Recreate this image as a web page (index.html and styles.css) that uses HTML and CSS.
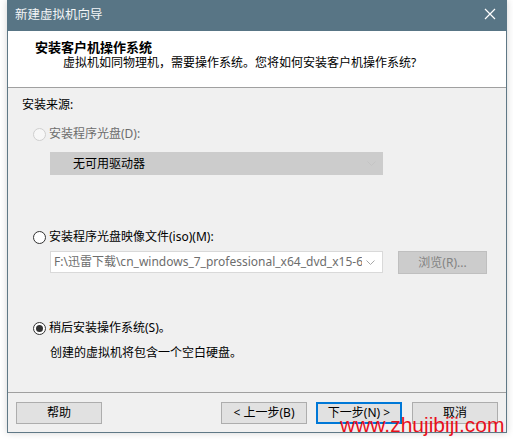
FILE: index.html
```html
<!DOCTYPE html>
<html lang="zh-CN">
<head>
<meta charset="utf-8">
<title>新建虚拟机向导</title>
<link rel="stylesheet" href="styles.css">
</head>
<body>
<div class="window">
  <div class="titlebar">
    <span class="title">新建虚拟机向导</span>
    <svg class="close" width="12" height="12" viewBox="0 0 12 12"><path d="M1 1 L11 11 M11 1 L1 11" stroke="#ffffff" stroke-width="1.2" fill="none"/></svg>
  </div>
  <div class="header">
    <div class="heading">安装客户机操作系统</div>
    <div class="subtitle">虚拟机如同物理机，需要操作系统。您将如何安装客户机操作系统?</div>
  </div>
  <div class="content">
    <div class="label">安装来源:</div>
    <div class="radio-row disabled r1">
      <span class="radio"></span><span>安装程序光盘(D):</span>
    </div>
    <div class="combo disabled-combo">
      <span class="combo-text">无可用驱动器</span>
      <svg class="chev" width="9" height="5" viewBox="0 0 9 5"><path d="M0.5 0.5 L4.5 4.5 L8.5 0.5" stroke="#c4c4c4" fill="none"/></svg>
    </div>
    <div class="radio-row r2">
      <span class="radio"></span><span>安装程序光盘映像文件(iso)(M):</span>
    </div>
    <div class="iso-row">
      <div class="combo iso-combo">
        <span class="iso-text">F:\迅雷下载\cn_windows_7_professional_x64_dvd_x15-65791.iso</span>
        <svg class="chev" width="9" height="5" viewBox="0 0 9 5"><path d="M0.5 0.5 L4.5 4.5 L8.5 0.5" stroke="#a8a8a8" fill="none"/></svg>
      </div>
      <div class="btn btn-disabled browse">浏览(R)...</div>
    </div>
    <div class="radio-row r3">
      <span class="radio checked"></span><span>稍后安装操作系统(S)。</span>
    </div>
    <div class="note">创建的虚拟机将包含一个空白硬盘。</div>
  </div>
  <div class="footer">
    <div class="btn">帮助</div>
    <div class="spacer"></div>
    <div class="btn">&lt; 上一步(B)</div>
    <div class="btn btn-focus">下一步(N) &gt;</div>
    <div class="btn">取消</div>
  </div>
</div>
<div class="watermark">www.zhujibiji.com</div>
</body>
</html>
```

FILE: styles.css
```css
* { box-sizing: border-box; }
html, body { margin: 0; padding: 0; }
body {
  width: 513px;
  height: 440px;
  background: #ffffff;
  font-family: "Noto Sans", "Noto Sans CJK SC", sans-serif;
  font-size: 12px;
  color: #000;
  position: relative;
  overflow: hidden;
}
.window {
  margin-left: 7px;
  width: 500px;
  height: 433px;
  border: 1px solid #5f7886;
  border-top: none;
  background: #f0f0f0;
  display: flex;
  flex-direction: column;
  box-shadow: 0 0 7px rgba(0,0,0,0.18);
}
.titlebar {
  height: 31px;
  background: #587585;
  color: #f4f6f7;
  display: flex;
  align-items: center;
  justify-content: space-between;
  padding: 0 11px 2px 8px;
  margin: 0 -1px;
  font-size: 12.5px;
  line-height: 16px;
}
.close { display: block; margin-top: -2px; }
.header {
  height: 57px;
  background: #ffffff;
  border-bottom: 1px solid #a0a0a0;
  padding-top: 8px;
  line-height: 16px;
}
.heading {
  padding-left: 27px;
  font-weight: bold;
  font-size: 13px;
}
.subtitle {
  padding-left: 55px;
}
.content {
  flex: 1;
  padding-top: 9px;
  line-height: 16px;
  display: flex;
  flex-direction: column;
  align-items: flex-start;
}
.label { padding-left: 14px; }
.radio-row {
  display: flex;
  align-items: center;
  gap: 3px;
  padding-left: 25px;
  height: 16px;
}
.radio {
  width: 13px;
  height: 13px;
  border: 1px solid #333;
  border-radius: 50%;
  background: #fff;
  display: flex;
  align-items: center;
  justify-content: center;
}
.radio.checked::after {
  content: "";
  width: 7px;
  height: 7px;
  border-radius: 50%;
  background: #333;
}
.disabled { color: #6d6d6d; }
.disabled .radio { border-color: #cfcfcf; background: #f7f7f7; }
.r1 { margin-top: 13px; }
.r2 { margin-top: 54px; }
.r3 { margin-top: 46px; }
.combo {
  margin-left: 42px;
  width: 333px;
  display: flex;
  align-items: center;
  justify-content: space-between;
  overflow: hidden;
}
.disabled-combo {
  margin-top: 10px;
  height: 23px;
  background: #cccccc;
  border: 1px solid #cccccc;
  padding: 0 6px 0 22px;
}
.combo-text { color: #000; }
.chev { flex: none; display: block; }
.iso-row {
  margin-top: 6px;
  display: flex;
  align-items: flex-start;
}
.iso-combo {
  height: 22px;
  background: #fff;
  border: 1px solid #d9d9d9;
  padding: 0 7px 0 3px;
  gap: 4px;
}
.iso-text {
  color: #6d6d6d;
  white-space: nowrap;
  overflow: hidden;
  flex: 1;
  min-width: 0;
}
.btn {
  width: 86px;
  height: 22px;
  border: 1px solid #adadad;
  background: #e1e1e1;
  display: flex;
  align-items: center;
  justify-content: center;
  line-height: 16px;
  color: #000;
  flex: none;
}
.btn-disabled {
  background: #cccccc;
  border-color: #bfbfbf;
  color: #838383;
}
.browse {
  margin-left: 15px;
  width: 89px;
  height: 23px;
}
.note { margin-top: 9px; padding-left: 42px; }
.footer {
  height: 40px;
  border-top: 1px solid #a0a0a0;
  display: flex;
  align-items: flex-start;
  padding: 9px 8px 0 8px;
  gap: 9px;
}
.footer .spacer { flex: 1; }
.footer .btn:last-child { margin-left: 1px; }
.btn-focus {
  border: 2px solid #0078d7;
}
.watermark {
  position: absolute;
  left: 340px;
  top: 413px;
  font-family: "Liberation Sans", Arial, sans-serif;
  font-size: 21px;
  line-height: 24px;
  color: #e8101c;
  white-space: nowrap;
}
```
